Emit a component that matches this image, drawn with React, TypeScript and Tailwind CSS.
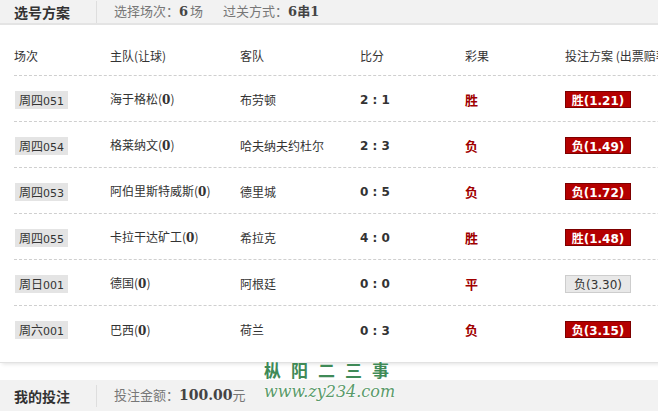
import type { ReactNode } from 'react'

interface Row {
  no: string
  home: string
  away: string
  score: string
  result: string
  bet: string
  hit: boolean
}

const rows: Row[] = [
  { no: '周四051', home: '海于格松', away: '布劳顿', score: '2 : 1', result: '胜', bet: '胜(1.21)', hit: true },
  { no: '周四054', home: '格莱纳文', away: '哈夫纳夫约杜尔', score: '2 : 3', result: '负', bet: '负(1.49)', hit: true },
  { no: '周四053', home: '阿伯里斯特威斯', away: '德里城', score: '0 : 5', result: '负', bet: '负(1.72)', hit: true },
  { no: '周四055', home: '卡拉干达矿工', away: '希拉克', score: '4 : 0', result: '胜', bet: '胜(1.48)', hit: true },
  { no: '周日001', home: '德国', away: '阿根廷', score: '0 : 0', result: '平', bet: '负(3.30)', hit: false },
  { no: '周六001', home: '巴西', away: '荷兰', score: '0 : 3', result: '负', bet: '负(3.15)', hit: true },
]

const cjk = "font-['Noto_Sans_CJK_SC',sans-serif]"

function Bar({ title, className, children }: { title: string; className: string; children: ReactNode }) {
  return (
    <div className={`flex items-center bg-[#f2f2f2] ${className}`}>
      <div className="w-[96px] pl-[14px] text-[14px] font-bold leading-none text-[#333]">{title}</div>
      <div className="h-[22px] w-px bg-[#dedede]" />
      <div className="flex items-baseline pl-[17px] text-[13px] text-[#777]">{children}</div>
    </div>
  )
}

function Cols({ a, b, c, d, e, f }: Record<'a' | 'b' | 'c' | 'd' | 'e' | 'f', ReactNode>) {
  return (
    <>
      <div className="w-[96px] shrink-0">{a}</div>
      <div className="w-[130px] shrink-0">{b}</div>
      <div className="w-[120px] shrink-0">{c}</div>
      <div className="w-[105px] shrink-0">{d}</div>
      <div className="w-[100px] shrink-0">{e}</div>
      <div className="shrink-0">{f}</div>
    </>
  )
}

export default function App() {
  return (
    <div className={`relative flex h-[411px] w-[658px] flex-col overflow-hidden whitespace-nowrap bg-white ${cjk}`}>
      <Bar title="选号方案" className="h-[25px] shrink-0 border-b-2 border-[#e4e4e4]">
        <span>选择场次：</span>
        <b className="font-['DejaVu_Serif',serif] text-[13px] text-[#444]">6</b>
        <span className="ml-[2px]">场</span>
        <span className="ml-[20px]">过关方式：</span>
        <b className="text-[#444]"><span className="font-['DejaVu_Serif',serif]">6</span>串<span className="font-['DejaVu_Serif',serif]">1</span></b>
      </Bar>

      {/* match table */}
      <div className="w-[900px] shrink-0 border-b border-[#e2e2e2] pb-[10px] pl-[14px] shadow-[0_3px_4px_-2px_rgba(0,0,0,0.12)]">
        <div className="flex h-[51px] items-center border-b border-dashed border-[#cfcfcf] pt-[12px] text-[12px] text-[#333]">
          <Cols a="场次" b="主队(让球)" c="客队" d="比分" e="彩果" f="投注方案 (出票赔率)" />
        </div>
        {rows.map((r, i) => (
          <div
            key={r.no}
            className={`flex h-[46px] items-center pt-[2px] text-[12px] text-[#333] ${i < rows.length - 1 ? 'border-b border-dashed border-[#cfcfcf]' : ''}`}
          >
            <Cols
              a={
                <span className="ml-px inline-block h-[18px] bg-[#e4e4e4] px-[4px] text-[12px] leading-[18px] text-[#333]">
                  {r.no.slice(0, 2)}
                  <span className="font-['DejaVu_Sans',sans-serif] text-[11px]">{r.no.slice(2)}</span>
                </span>
              }
              b={
                <span>
                  {r.home}(<b className="font-['DejaVu_Serif',serif] text-[12px]">0</b>)
                </span>
              }
              c={r.away}
              d={<b className="font-['DejaVu_Sans',sans-serif] text-[12px] text-[#333]">{r.score}</b>}
              e={<b className="text-[13px] text-[#a00000]">{r.result}</b>}
              f={
                r.hit ? (
                  <span className="inline-block h-[17px] w-[66px] border border-[#7d0000] bg-[#b40000] text-center text-[12px] font-bold leading-[15px] text-white">
                    {r.bet.slice(0, 1)}
                    <span className="font-['DejaVu_Sans',sans-serif] text-[12px]">{r.bet.slice(1)}</span>
                  </span>
                ) : (
                  <span className="inline-block h-[18px] w-[66px] border border-[#cdcdcd] bg-[#e8e8e8] text-center text-[12px] leading-[16px] text-[#333]">
                    {r.bet.slice(0, 1)}
                    <span className="font-['DejaVu_Sans',sans-serif] text-[12px]">{r.bet.slice(1)}</span>
                  </span>
                )
              }
            />
          </div>
        ))}
      </div>

      <div className="h-[17px] shrink-0" />

      <Bar title="我的投注" className="flex-1">
        <span>投注金额：</span>
        <b className="font-['DejaVu_Serif',serif] text-[14px] text-[#444]">100.00</b>
        <span>元</span>
      </Bar>

      {/* watermark */}
      <div className="pointer-events-none absolute left-[264px] top-[361px] flex flex-col items-start">
        <div className="flex gap-[10px] text-[17px] font-bold leading-none text-[#3f8a57] [text-shadow:0_0_2px_#fff,0_0_2px_#fff]">
          <span>枞</span><span>阳</span><span>二</span><span>三</span><span>事</span>
        </div>
        <div className="mt-[6px] font-['DejaVu_Serif',serif] text-[16px] italic leading-none text-[#5a9a6a] [text-shadow:0_0_2px_#fff,0_0_2px_#fff]">
          www.zy234.com
        </div>
      </div>
    </div>
  )
}
